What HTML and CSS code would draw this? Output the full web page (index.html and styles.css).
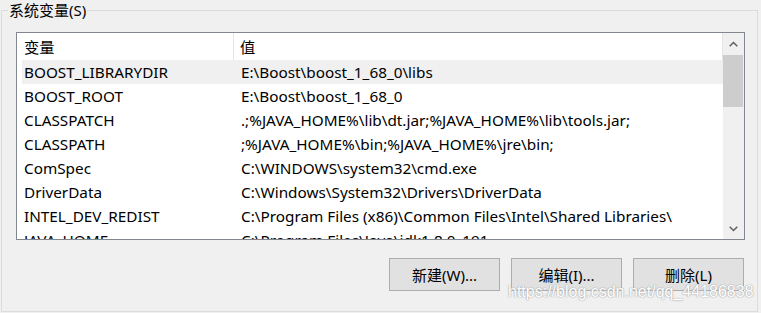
FILE: index.html
```html
<!DOCTYPE html>
<html>
<head>
<meta charset="utf-8">
<link rel="stylesheet" href="styles.css">
</head>
<body>
<fieldset class="group">
  <legend class="group-title">系统变量(S)</legend>
  <div class="group-body">
    <div class="list">
      <div class="list-main">
        <div class="list-header">
          <div class="hcell">变量</div>
          <div class="hcell">值</div>
        </div>
        <div class="row selected"><div class="cell">BOOST_LIBRARYDIR</div><div class="cell">E:\Boost\boost_1_68_0\libs</div></div>
        <div class="row"><div class="cell">BOOST_ROOT</div><div class="cell">E:\Boost\boost_1_68_0</div></div>
        <div class="row"><div class="cell">CLASSPATCH</div><div class="cell">.;%JAVA_HOME%\lib\dt.jar;%JAVA_HOME%\lib\tools.jar;</div></div>
        <div class="row"><div class="cell">CLASSPATH</div><div class="cell">;%JAVA_HOME%\bin;%JAVA_HOME%\jre\bin;</div></div>
        <div class="row"><div class="cell">ComSpec</div><div class="cell">C:\WINDOWS\system32\cmd.exe</div></div>
        <div class="row"><div class="cell">DriverData</div><div class="cell">C:\Windows\System32\Drivers\DriverData</div></div>
        <div class="row"><div class="cell">INTEL_DEV_REDIST</div><div class="cell">C:\Program Files (x86)\Common Files\Intel\Shared Libraries\</div></div>
        <div class="row"><div class="cell">JAVA_HOME</div><div class="cell">C:\Program Files\Java\jdk1.8.0_191</div></div>
      </div>
      <div class="scrollbar">
        <div class="arrow">
          <svg width="9" height="6" viewBox="0 0 9 6"><path d="M0.7 5.3 L4.5 1.5 L8.3 5.3" fill="none" stroke="#606060" stroke-width="1.5"/></svg>
        </div>
        <div class="track"><div class="thumb"></div></div>
        <div class="arrow">
          <svg width="9" height="6" viewBox="0 0 9 6"><path d="M0.7 0.7 L4.5 4.5 L8.3 0.7" fill="none" stroke="#606060" stroke-width="1.5"/></svg>
        </div>
      </div>
    </div>
    <div class="buttons">
      <button class="btn">新建(W)...</button>
      <button class="btn">编辑(I)...</button>
      <button class="btn">删除(L)</button>
    </div>
  </div>
</fieldset>
<div class="watermark">https://blog.csdn.net/qq_44186838</div>
</body>
</html>
```

FILE: styles.css
```css
html, body {
  margin: 0;
  padding: 0;
  background: #f0f0f0;
}
body {
  font-family: "Noto Sans", "Noto Sans CJK SC", sans-serif;
  font-size: 15px;
  color: #000;
  position: relative;
  width: 761px;
  height: 313px;
  overflow: hidden;
}
.group {
  margin: 0 3px 0 1px;
  padding: 0;
  border: 1px solid #dcdcdc;
  min-width: 0;
}
.group-title {
  margin-left: 6px;
  padding: 0 1px;
  line-height: 20px;
  height: 20px;
}
.group-body {
  padding: 12px 12px 20px 14px;
}
.list {
  display: flex;
  height: 206px;
  border: 1px solid #828790;
  background: #fff;
}
.list-main {
  flex: 1;
  overflow: hidden;
  white-space: nowrap;
  font-size: 15.3px;
}
.list-header {
  display: grid;
  grid-template-columns: 217px 1fr;
  height: 27px;
  background: #fff;
  border-right: 1px solid #e5e5e5;
}
.hcell {
  padding: 2px 0 0 7px;
  line-height: 25px;
}
.hcell:first-child {
  border-right: 1px solid #e5e5e5;
}
.hcell:last-child {
  padding-left: 6px;
}
.row {
  display: grid;
  grid-template-columns: 212px 1fr;
  height: 24px;
  line-height: 24px;
  margin-left: 5px;
}
.row.selected {
  background: #f0f0f0;
}
.cell {
  padding-left: 2px;
  overflow: hidden;
}
.cell + .cell {
  padding-left: 7px;
}
.scrollbar {
  width: 21px;
  display: flex;
  flex-direction: column;
  background: #f0f0f0;
}
.arrow {
  height: 21px;
  display: flex;
  align-items: center;
  justify-content: center;
}
.track {
  flex: 1;
  padding: 1px 1px 0 0;
}
.thumb {
  height: 52px;
  background: #cdcdcd;
}
.buttons {
  display: flex;
  justify-content: flex-end;
  gap: 11px;
  margin-top: 18px;
  padding-right: 1px;
}
.btn {
  width: 111px;
  height: 33px;
  padding: 0;
  background: #e1e1e1;
  border: 1px solid #adadad;
  font-family: "Noto Sans", "Noto Sans CJK SC", sans-serif;
  font-size: 15px;
  color: #000;
}
.watermark {
  position: absolute;
  left: 508px;
  top: 282px;
  font-family: "Liberation Sans", Arial, sans-serif;
  font-size: 16px;
  line-height: 20px;
  color: #ffffff;
  text-shadow: 0 0 1px #a8a8a8, 0 0 1px #a8a8a8, 0 0 2px #c8c8c8;
}
```
